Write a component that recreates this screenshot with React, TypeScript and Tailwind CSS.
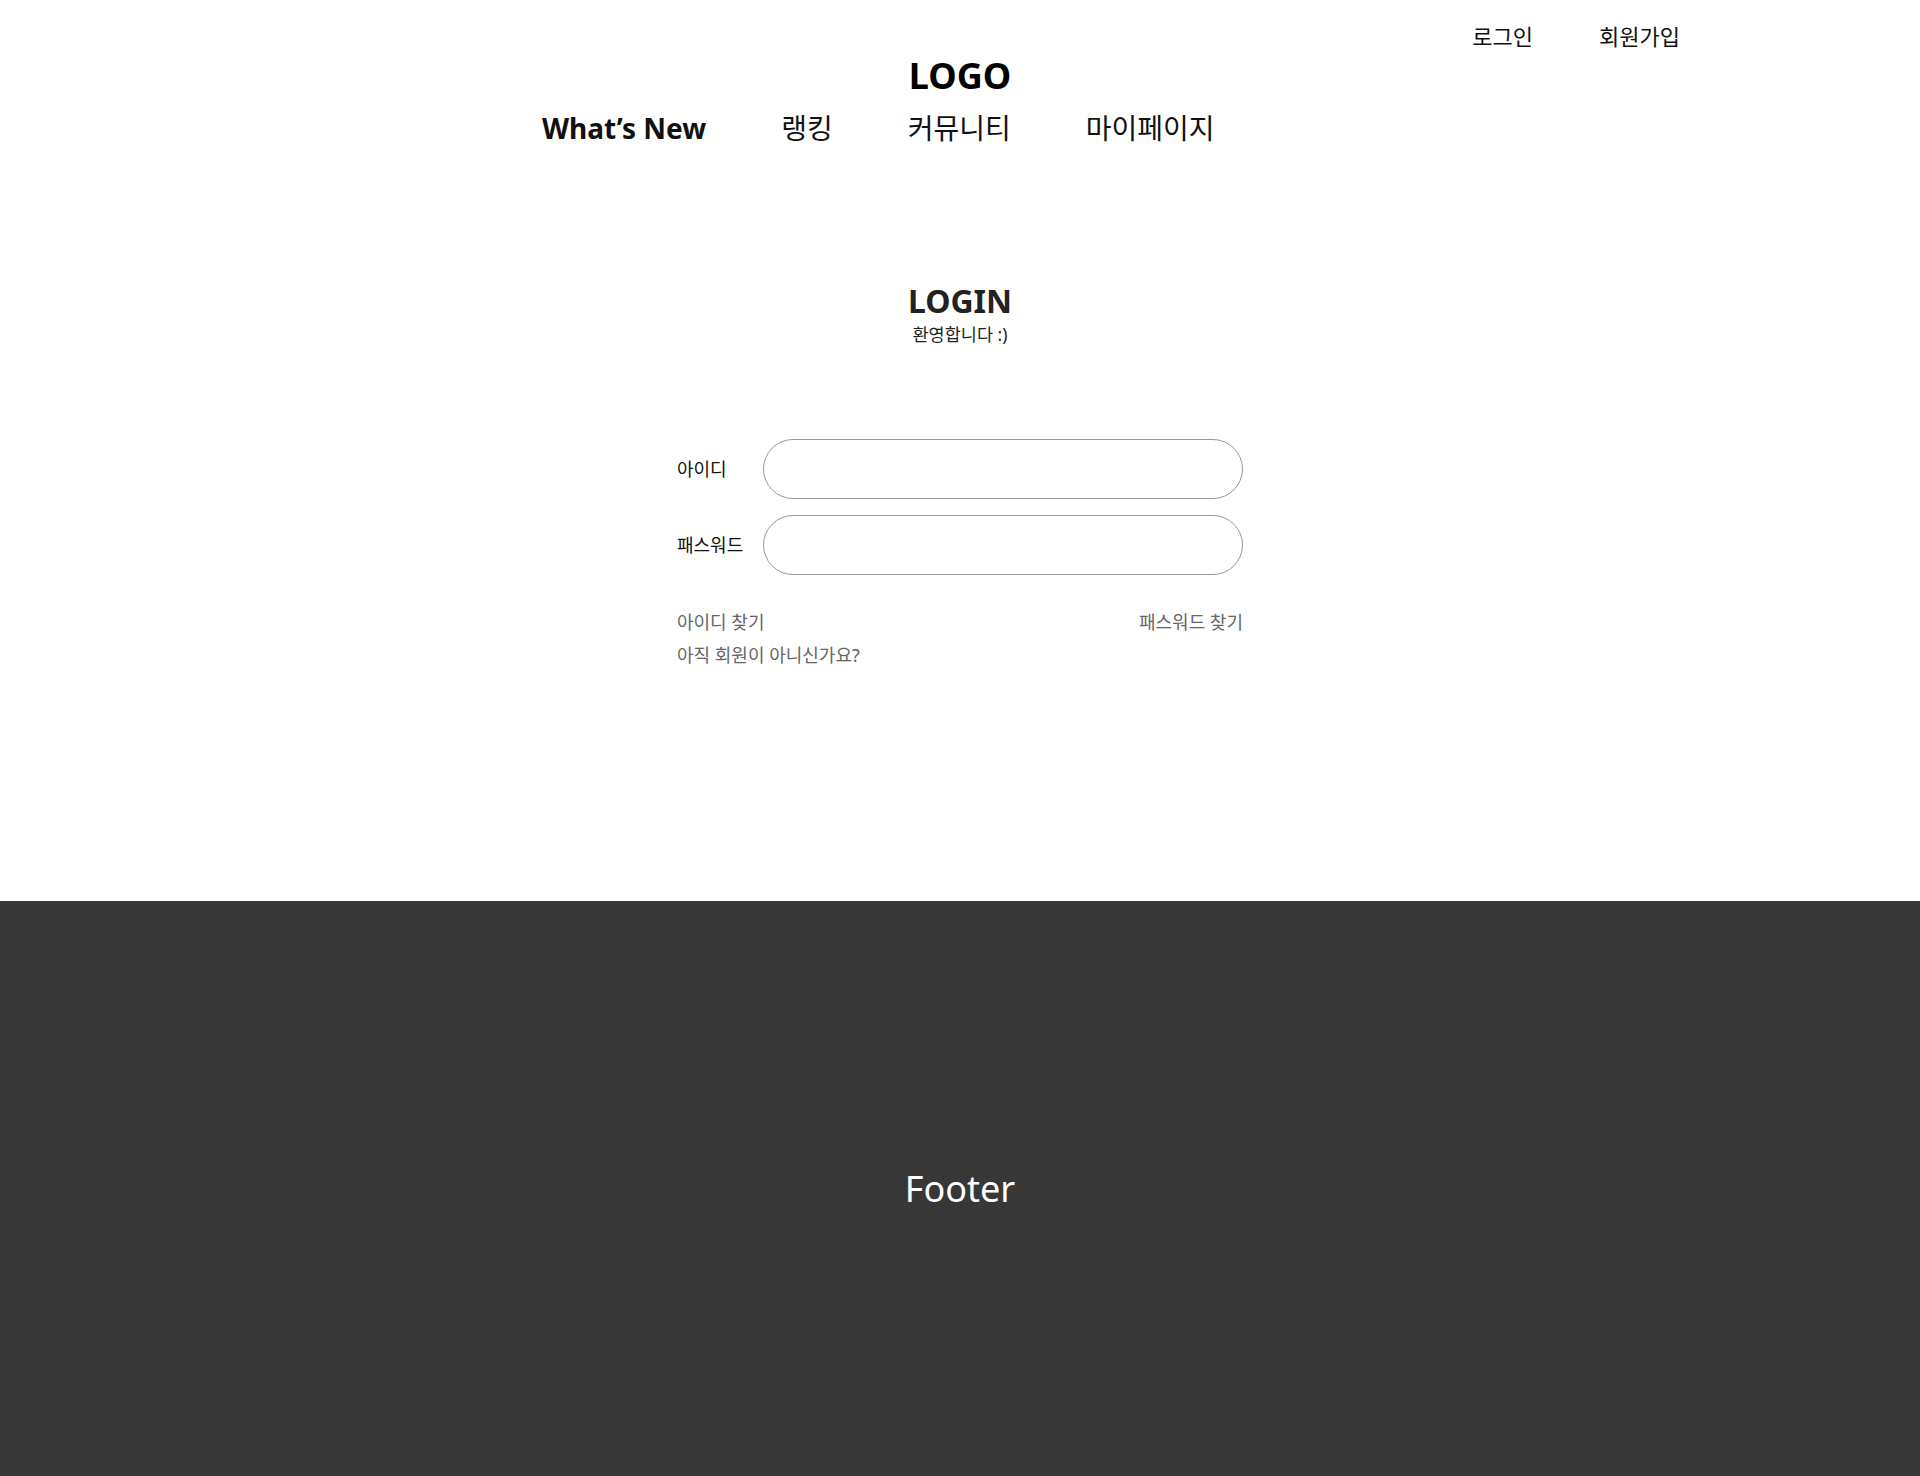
import React from 'react'

const font = "font-['Noto_Sans','Noto_Sans_CJK_KR',sans-serif]"

function Header() {
  return (
    <header className="flex flex-col">
      {/* top links */}
      <div className="flex justify-end gap-[66px] pt-[21px] pr-[240px] text-[22px] leading-[30px] text-[#111]">
        <a>로그인</a>
        <a>회원가입</a>
      </div>
      <h1 className="mt-[1px] text-center text-[36px] font-bold leading-[48px] text-black">LOGO</h1>
      <nav className="mt-[8px] flex items-center gap-[75px] pl-[542px] text-[28px] leading-[40px] text-[#111]">
        <a className="font-bold">What’s New</a>
        <a>랭킹</a>
        <a>커뮤니티</a>
        <a>마이페이지</a>
      </nav>
    </header>
  )
}

function LoginForm() {
  return (
    <section className="flex flex-col items-center">
      <h2 className="mt-[133px] text-[32px] font-bold leading-[40px] text-[#222]">LOGIN</h2>
      <p className="mt-[2px] text-[17.5px] leading-[22px] text-[#222]">환영합니다 :)</p>

      <form className="mt-[94px] flex w-[566px] flex-col">
        <div className="flex items-center justify-between">
          <label className="text-[18px] text-[#111]">아이디</label>
          <input className="h-[60px] w-[480px] rounded-full border border-[#999] px-6 outline-none" />
        </div>
        <div className="mt-[16px] flex items-center justify-between">
          <label className="text-[18px] text-[#111]">패스워드</label>
          <input type="password" className="h-[60px] w-[480px] rounded-full border border-[#999] px-6 outline-none" />
        </div>

        <div className="mt-[35px] flex justify-between text-[18px] leading-[24px] text-[#666]">
          <a>아이디 찾기</a>
          <a>패스워드 찾기</a>
        </div>
        <a className="mt-[9px] text-[18px] leading-[24px] text-[#666]">아직 회원이 아니신가요?</a>
      </form>
    </section>
  )
}

export default function App() {
  return (
    <div className={`${font} flex min-h-[1476px] flex-col bg-white`}>
      <div className="h-[901px]">
        <Header />
        <LoginForm />
      </div>
      <footer className="flex h-[575px] items-center justify-center bg-[#373737]">
        <p className="text-[36px] text-white">Footer</p>
      </footer>
    </div>
  )
}
